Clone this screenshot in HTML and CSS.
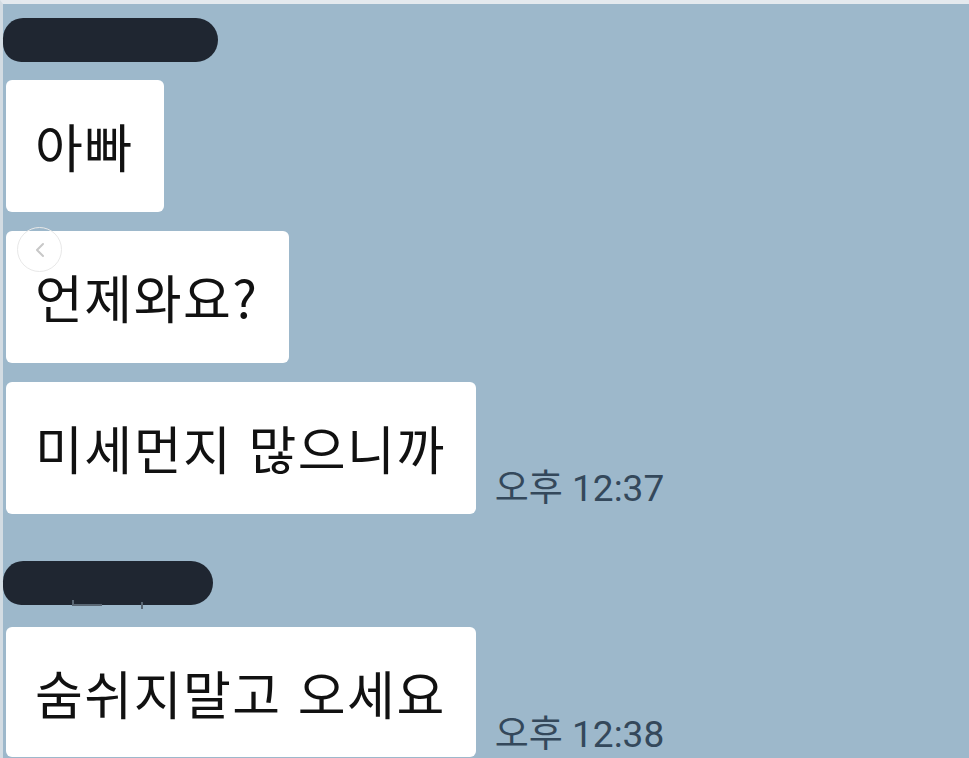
FILE: index.html
```html
<!DOCTYPE html>
<html lang="ko">
<head>
<meta charset="utf-8">
<link rel="stylesheet" href="styles.css">
</head>
<body>
<div class="screen">
  <div class="group">
    <div class="sender"><span class="redact redact-long"></span></div>
    <div class="msg"><div class="bubble">아빠</div></div>
    <div class="msg"><div class="bubble bubble-nav"><span class="nav-btn"><svg width="16" height="18" viewBox="0 0 16 18"><path d="M11 3 L5 9 L11 15" fill="none" stroke="#c8c8c8" stroke-width="2" stroke-linecap="round" stroke-linejoin="round"/></svg></span>언제와요?</div></div>
    <div class="msg"><div class="bubble">미세먼지 많으니까</div><span class="time">오후 12:37</span></div>
  </div>
  <div class="group group-second">
    <div class="sender"><span class="redact redact-short"></span><svg class="name-peek" width="160" height="12" viewBox="0 0 160 12"><path d="M70 1 V6 H99" fill="none" stroke="#5a6774" stroke-width="2"/><path d="M139 3 V10" fill="none" stroke="#5a6774" stroke-width="2"/></svg></div>
    <div class="msg"><div class="bubble bubble-last">숨쉬지말고 오세요</div><span class="time time-last">오후 12:38</span></div>
  </div>
</div>
</body>
</html>
```
FILE: styles.css
```css
html, body {
  margin: 0;
  padding: 0;
  background: #9db8cb;
}
body {
  font-family: "Noto Sans CJK KR", "Noto Sans", sans-serif;
  width: 969px;
  height: 758px;
  overflow: hidden;
}
.screen {
  box-sizing: border-box;
  width: 969px;
  height: 758px;
  background: #9db8cb;
  border-top: 4px solid #e4e9ee;
  border-left: 3px solid #d3dce3;
  padding-top: 14px;
  display: flex;
  flex-direction: column;
}
.group {
  display: flex;
  flex-direction: column;
  gap: 19px;
}
.group-second {
  margin-top: 47px;
  gap: 23px;
}
.sender {
  position: relative;
  height: 44px;
  margin-bottom: -1px;
}
.redact {
  display: block;
  height: 44px;
  border-radius: 22px 24px 24px 20px;
  background: #1f2631;
}
.redact-long { width: 215px; }
.redact-short { width: 210px; }
.name-peek {
  position: absolute;
  left: 0;
  top: 38px;
}
.msg {
  display: flex;
  align-items: flex-end;
  gap: 19px;
  padding-left: 3px;
}
.bubble {
  position: relative;
  background: #ffffff;
  border-radius: 6px;
  padding: 36px 30px 36px 29px;
  font-size: 52px;
  font-weight: 400;
  line-height: 60px;
  color: #111111;
  letter-spacing: 1.5px;
  white-space: nowrap;
}
.bubble-last {
  padding-bottom: 34px;
}
.nav-btn {
  position: absolute;
  left: 11px;
  top: -4px;
  width: 45px;
  height: 45px;
  border: 1.5px solid #e8e8e8;
  border-radius: 50%;
  display: flex;
  align-items: center;
  justify-content: center;
  box-sizing: border-box;
}
.time {
  font-family: "Roboto", "Noto Sans CJK KR", sans-serif;
  font-size: 37px;
  font-weight: 400;
  line-height: 40px;
  color: #34485b;
  margin-bottom: 5px;
  white-space: nowrap;
}
.time-last {
  margin-bottom: 2px;
}
```
